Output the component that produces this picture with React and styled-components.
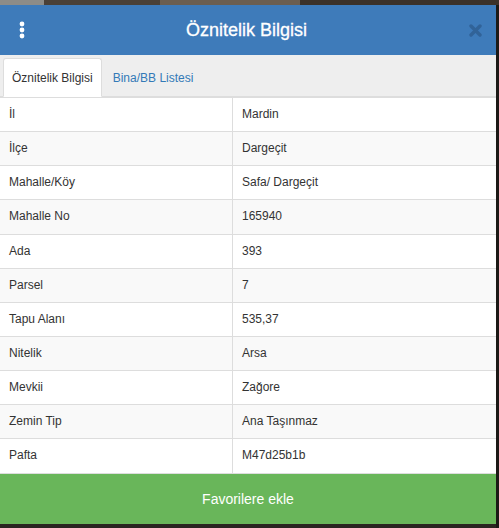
import React, { useState } from "react";
import styled, { createGlobalStyle } from "styled-components";

const GlobalStyle = createGlobalStyle`
    html, body {
        margin: 0;
        padding: 0;
    }
    body {
        width: 499px;
        height: 528px;
        overflow: hidden;
        font-family: "Liberation Sans", Arial, sans-serif;
        background: linear-gradient(90deg, #8d8c88 0 44px, #4a4037 44px 160px, #6b5e50 160px 300px, #3b3129 300px);
    }
`;

const Panel = styled.div`
    margin-top: 5px;
    width: 496px;
    background: #ffffff;
    box-shadow: 3px 0 0 #1c1916, 0 5px 0 #2a2520, 3px 5px 0 #1c1916;
`;

const Header = styled.div`
    height: 50px;
    background: #3e7bba;
    display: flex;
    align-items: center;
    justify-content: space-between;
    padding: 0 14px 0 15px;
    box-sizing: border-box;
`;

const Title = styled.h1`
    margin: 0;
    flex: 1;
    text-align: center;
    color: #ffffff;
    font-size: 18px;
    font-weight: normal;
    padding-right: 4px;
    -webkit-text-stroke: 0.3px #ffffff;
`;

const IconButton = styled.button`
    border: none;
    background: none;
    padding: 0;
    width: 14px;
    height: 20px;
    display: flex;
    align-items: center;
    justify-content: center;
    cursor: pointer;
`;

const TabBar = styled.div`
    height: 42px;
    background: #eeeeee;
    display: flex;
    align-items: flex-end;
    gap: 2px;
    padding-left: 3px;
    border-bottom: 1px solid #dddddd;
    box-sizing: border-box;
`;

const Tab = styled.div`
    height: 39px;
    box-sizing: border-box;
    padding: 0 8px;
    display: flex;
    align-items: center;
    font-size: 12px;
    cursor: pointer;
    margin-bottom: -1px;
    color: ${(p) => (p.$active ? "#333333" : "#337ab7")};
    background: ${(p) => (p.$active ? "#ffffff" : "transparent")};
    border: 1px solid ${(p) => (p.$active ? "#dddddd" : "transparent")};
    border-bottom-color: ${(p) => (p.$active ? "#ffffff" : "transparent")};
    border-radius: 3px 3px 0 0;
`;

const Table = styled.table`
    width: 100%;
    border-collapse: collapse;
    font-size: 12px;
    line-height: 1.42857;
    color: #333333;
    border-bottom: 1px solid #dddddd;
`;

const Row = styled.tr`
    background: ${(p) => (p.$striped ? "#f9f9f9" : "#ffffff")};
`;

const Cell = styled.td`
    padding: 8px 8px 8px 9px;
    border-top: 1px solid #dddddd;
    width: ${(p) => p.$width || "auto"};
    & + & {
        border-left: 1px solid #dddddd;
    }
`;

const SaveButton = styled.button`
    display: block;
    width: 100%;
    height: 50px;
    border: none;
    background: #69b65a;
    color: #ffffff;
    font-family: inherit;
    font-size: 14px;
    cursor: pointer;
`;

const rows = [
    ["İl", "Mardin"],
    ["İlçe", "Dargeçit"],
    ["Mahalle/Köy", "Safa/ Dargeçit"],
    ["Mahalle No", "165940"],
    ["Ada", "393"],
    ["Parsel", "7"],
    ["Tapu Alanı", "535,37"],
    ["Nitelik", "Arsa"],
    ["Mevkii", "Zağore"],
    ["Zemin Tip", "Ana Taşınmaz"],
    ["Pafta", "M47d25b1b"],
];

const App = () => {
    const [tab, setTab] = useState(0);

    return (
        <>
            <GlobalStyle />
            <Panel>
                <Header>
                    <IconButton aria-label="menu">
                        <svg width="6" height="18" viewBox="0 0 6 18">
                            <circle cx="3" cy="3" r="2.4" fill="#fff" />
                            <circle cx="3" cy="9" r="2.4" fill="#fff" />
                            <circle cx="3" cy="15" r="2.4" fill="#fff" />
                        </svg>
                    </IconButton>
                    <Title>Öznitelik Bilgisi</Title>
                    <IconButton aria-label="close">
                        <svg width="13" height="13" viewBox="0 0 13 13">
                            <path d="M2 2 L11 11 M11 2 L2 11" stroke="#2f5f93" strokeWidth="3.4" strokeLinecap="round" opacity="0.85" />
                        </svg>
                    </IconButton>
                </Header>
                <TabBar>
                    <Tab $active={tab === 0} onClick={() => setTab(0)}>Öznitelik Bilgisi</Tab>
                    <Tab $active={tab === 1} onClick={() => setTab(1)}>Bina/BB Listesi</Tab>
                </TabBar>
                <Table>
                    <tbody>
                        {rows.map(([label, value], i) => (
                            <Row key={label} $striped={i % 2 === 1}>
                                <Cell $width="215px">{label}</Cell>
                                <Cell>{value}</Cell>
                            </Row>
                        ))}
                    </tbody>
                </Table>
                <SaveButton type="button">Favorilere ekle</SaveButton>
            </Panel>
        </>
    );
};

export default App;
